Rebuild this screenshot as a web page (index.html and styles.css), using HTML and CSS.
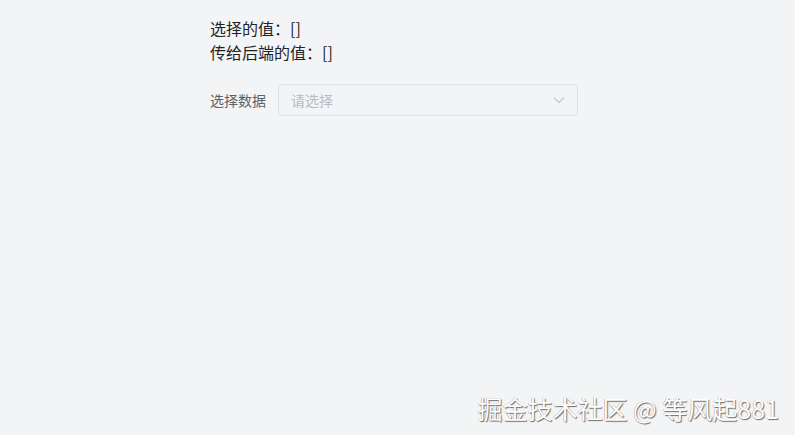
FILE: index.html
```html
<!DOCTYPE html>
<html lang="zh-CN">
<head>
<meta charset="utf-8">
<link rel="stylesheet" href="styles.css">
</head>
<body>
<div class="page">
  <div class="values">
    <div class="line">选择的值：[]</div>
    <div class="line">传给后端的值：[]</div>
  </div>
  <div class="form-item">
    <label class="label">选择数据</label>
    <div class="select">
      <span class="placeholder">请选择</span>
      <svg class="arrow" width="14" height="14" viewBox="0 0 1024 1024"><path fill="currentColor" d="M831.872 340.864 512 652.672 192.128 340.864a30.592 30.592 0 0 0-42.752 0 29.12 29.12 0 0 0 0 41.6L489.664 714.24a32 32 0 0 0 44.672 0l340.288-331.712a29.12 29.12 0 0 0 0-41.728 30.592 30.592 0 0 0-42.752 0z"/></svg>
    </div>
  </div>
</div>
<div class="watermark">掘金技术社区 @ 等风起881</div>
</body>
</html>
```
FILE: styles.css
```css
html, body {
  margin: 0;
  padding: 0;
  height: 100%;
}
body {
  background: #f3f4f6;
  font-family: "Noto Sans CJK SC", "Noto Sans", sans-serif;
  color: #303133;
  position: relative;
  overflow: hidden;
}
.page {
  padding: 16px 0 0 210px;
}
.values .line {
  font-size: 16px;
  line-height: 24px;
  color: #1f2328;
}
.form-item {
  display: flex;
  align-items: center;
  margin-top: 20px;
}
.label {
  width: 68px;
  font-size: 14px;
  color: #606266;
  line-height: 32px;
}
.select {
  box-sizing: border-box;
  width: 300px;
  height: 32px;
  border: 1px solid #dcdfe6;
  border-radius: 4px;
  background: #f3f4f6;
  display: flex;
  align-items: center;
  justify-content: space-between;
  padding: 0 11px 0 12px;
}
.placeholder {
  font-size: 14px;
  color: #b8bbc1;
}
.arrow {
  color: #a8abb2;
}
.watermark {
  position: absolute;
  right: 16px;
  bottom: 11px;
  font-size: 25px;
  line-height: 32px;
  color: #ffffff;
  text-shadow: 1px 1px 1px rgba(0,0,0,0.55), -0.5px -0.5px 0.5px rgba(0,0,0,0.35);
}
```
